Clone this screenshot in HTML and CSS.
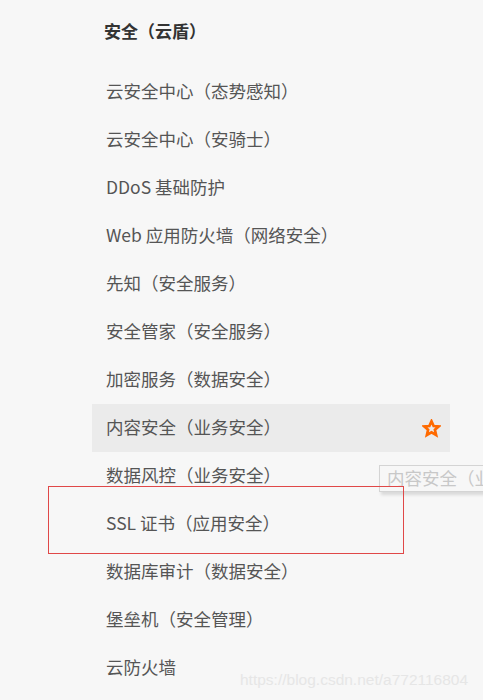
FILE: index.html
```html
<!DOCTYPE html>
<html lang="zh">
<head>
<meta charset="utf-8">
<link rel="stylesheet" href="styles.css">
</head>
<body>
<div class="page">
  <div class="menu">
    <div class="title">安全（云盾）</div>
    <ul class="list">
      <li class="item">云安全中心（态势感知）</li>
      <li class="item">云安全中心（安骑士）</li>
      <li class="item">DDoS 基础防护</li>
      <li class="item">Web 应用防火墙（网络安全）</li>
      <li class="item">先知（安全服务）</li>
      <li class="item">安全管家（安全服务）</li>
      <li class="item">加密服务（数据安全）</li>
      <li class="item active">内容安全（业务安全）
        <svg class="star" width="19" height="19" viewBox="0 0 24 24"><path d="M12 2.8l2.7 6 6.5.6-4.9 4.3 1.5 6.4L12 16.7l-5.8 3.4 1.5-6.4-4.9-4.3 6.5-.6z" fill="none" stroke="#ff6a00" stroke-width="3.4" stroke-linejoin="miter"/></svg>
      </li>
      <li class="item">数据风控（业务安全）</li>
      <li class="item">SSL 证书（应用安全）</li>
      <li class="item">数据库审计（数据安全）</li>
      <li class="item">堡垒机（安全管理）</li>
      <li class="item">云防火墙</li>
    </ul>
  </div>
  <div class="tooltip">内容安全（业务安全）</div>
  <div class="redbox"></div>
  <div class="watermark">https://blog.csdn.net/a772116804</div>
</div>
</body>
</html>
```
FILE: styles.css
```css
html, body {
  margin: 0;
  padding: 0;
  background: #f7f7f7;
}
.page {
  position: relative;
  width: 483px;
  height: 700px;
  overflow: hidden;
  font-family: "Noto Sans CJK SC", "Noto Sans", sans-serif;
  color: #555;
  text-spacing-trim: space-all;
}
.menu {
  padding-left: 92px;
  width: 358px;
}
.title {
  padding: 19px 0 25px 12px;
  line-height: 24px;
  font-size: 17px;
  font-weight: bold;
  color: #333;
}
.list {
  list-style: none;
  margin: 0;
  padding: 0;
}
.item {
  position: relative;
  height: 48px;
  line-height: 46px;
  padding-bottom: 2px;
  box-sizing: border-box;
  padding-left: 14px;
  font-size: 17.5px;
  display: flex;
  align-items: center;
}
.item.active {
  background: #ebebeb;
}
.star {
  margin-left: auto;
  margin-right: 9px;
  margin-top: 2px;
}
.tooltip {
  position: absolute;
  left: 379px;
  top: 465px;
  height: 25px;
  line-height: 24px;
  padding: 0 7px;
  white-space: nowrap;
  font-size: 17.5px;
  color: #c8c8c8;
  background: #f7f7f7;
  border: 1px solid #d4d4d4;
  box-shadow: 2px 3px 3px rgba(0,0,0,0.12);
}
.redbox {
  position: absolute;
  left: 48px;
  top: 486px;
  width: 354px;
  height: 66px;
  border: 1px solid #e04848;
}
.watermark {
  position: absolute;
  left: 240px;
  top: 671px;
  font-family: "Liberation Sans", Arial, sans-serif;
  font-size: 15.5px;
  color: #e6e6e6;
  white-space: nowrap;
}
```
